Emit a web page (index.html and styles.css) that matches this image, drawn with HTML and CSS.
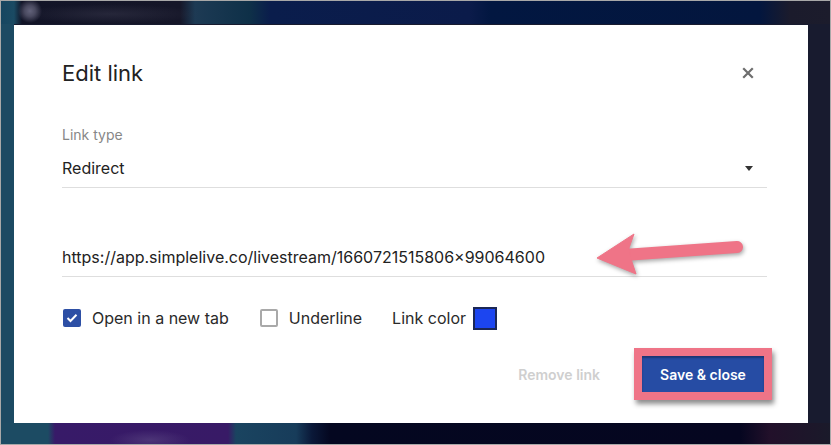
FILE: index.html
```html
<!DOCTYPE html>
<html>
<head>
<meta charset="utf-8">
<link rel="stylesheet" href="styles.css">
</head>
<body>
<div class="dialog">
  <div class="header">
    <h1 class="title">Edit link</h1>
    <span class="close" aria-label="Close">
      <svg width="12" height="12" viewBox="0 0 12 12"><path d="M2 2L10 10M10 2L2 10" stroke="#6e6e6e" stroke-width="2.2" stroke-linecap="square"/></svg>
    </span>
  </div>
  <div class="field">
    <div class="label">Link type</div>
    <div class="select">
      <span class="value">Redirect</span>
      <span class="caret"></span>
    </div>
  </div>
  <div class="url">https://app.simplelive.co/livestream/1660721515806×99064600</div>
  <div class="options">
    <label class="opt">
      <span class="box checked">
        <svg width="12" height="10" viewBox="0 0 12 10"><path d="M1.5 5L4.5 8L10.5 1.8" fill="none" stroke="#fff" stroke-width="2"/></svg>
      </span>
      <span>Open in a new tab</span>
    </label>
    <label class="opt">
      <span class="box"></span>
      <span>Underline</span>
    </label>
    <div class="opt color">
      <span>Link color</span>
      <span class="swatch"></span>
    </div>
  </div>
  <div class="actions">
    <span class="remove">Remove link</span>
    <button class="save">Save &amp; close</button>
  </div>
</div>
<svg class="arrow" width="160" height="60" viewBox="0 0 160 60">
  <g fill="#ef7487" stroke="#ef7487">
    <line x1="40" y1="28.5" x2="146" y2="21" stroke-width="12" stroke-linecap="round"/>
    <polygon points="6,32 43,8 38,22 41,36 45,48" stroke-width="1" stroke-linejoin="round"/>
  </g>
</svg>
</body>
</html>
```
FILE: styles.css
```css
html, body {
  margin: 0;
  padding: 0;
}
body {
  width: 831px;
  height: 445px;
  box-sizing: border-box;
  border: 1px solid #a8a8a8;
  overflow: hidden;
  font-family: Inter, "Noto Sans", sans-serif;
  color: #222;
  background:
    radial-gradient(ellipse 12px 12px at 30px 11px, #62627a 0, #4a4a60 45%, transparent 100%),
    radial-gradient(ellipse 90px 10px at 110px 14px, rgba(60, 60, 80, 0.45), transparent),
    radial-gradient(ellipse 40px 10px at 150px 440px, rgba(90, 70, 130, 0.6), transparent),
    linear-gradient(to right, #164560 0, #1a4a63 14px, #121427 22px, #151628 180px, #1d3a54 195px, #0e3048 250px, #0a1d4c 270px, #0b1b4a 470px, #021741 490px, #03163e 760px, #1b1b2c 790px, #1c1c2c 100%) top / 100% 24px no-repeat,
    linear-gradient(to right, #1c4b63 0, #1c4b63 48px, #371a68 55px, #381a66 228px, #1a4460 236px, #173c5a 296px, #0a1838 312px, #040720 330px, #050620 740px, #22102a 770px, #1a1a2a 100%) bottom / 100% 22px no-repeat,
    linear-gradient(to right, #1c4a63 0, #1c4a63 14px, #181b2f 14px);
  padding: 24px 22px 0 13px;
  position: relative;
}
.dialog {
  background: #fff;
  width: 794px;
  height: 398px;
  box-sizing: border-box;
  padding: 34px 41px 0 48px;
}
.header {
  display: flex;
  align-items: center;
  justify-content: space-between;
  height: 28px;
}
.title {
  margin: 0;
  font-size: 22px;
  font-weight: 400;
  line-height: 28px;
  color: #222;
}
.close {
  display: flex;
  width: 12px;
  height: 12px;
  margin-right: 13px;
}
.field {
  margin-top: 40px;
}
.label {
  font-size: 14px;
  line-height: 16px;
  color: #878787;
}
.select {
  margin-top: 15px;
  display: flex;
  align-items: center;
  justify-content: space-between;
  padding-bottom: 9px;
  border-bottom: 1px solid #dedede;
}
.value {
  font-size: 16px;
  line-height: 20px;
}
.caret {
  width: 0;
  height: 0;
  border-left: 4px solid transparent;
  border-right: 4px solid transparent;
  border-top: 5px solid #333;
  margin-right: 14px;
}
.url {
  margin-top: 59px;
  font-size: 16px;
  line-height: 20px;
  padding-bottom: 9px;
  border-bottom: 1px solid #dedede;
}
.options {
  margin-top: 32px;
  display: flex;
  align-items: center;
  height: 18px;
  padding-left: 1px;
  font-size: 16px;
  color: #2a2a2a;
}
.opt {
  display: flex;
  align-items: center;
  gap: 11px;
  margin-right: 31px;
}
.opt + .opt {
  margin-right: 30px;
}
.box {
  width: 18px;
  height: 18px;
  box-sizing: border-box;
  border: 2px solid #a9a9a9;
  border-radius: 2px;
  display: flex;
  align-items: center;
  justify-content: center;
}
.box.checked {
  border: none;
  background: #2d4fa5;
}
.opt.color {
  gap: 7px;
  margin-right: 0;
}
.swatch {
  width: 24px;
  height: 23px;
  box-sizing: border-box;
  border: 2px solid #1b2756;
  background: #1c45f0;
}
.actions {
  margin-top: 29px;
  display: flex;
  align-items: center;
  justify-content: flex-end;
  gap: 42px;
  padding-right: 3px;
}
.remove {
  font-size: 14px;
  font-weight: 600;
  color: #cfcfcf;
}
.save {
  width: 122px;
  height: 36px;
  border: none;
  background: #264ca4;
  color: #fff;
  font-family: Inter, "Noto Sans", sans-serif;
  font-size: 14px;
  font-weight: 600;
  box-shadow: inset 0 2px 2px rgba(0, 0, 0, 0.3), 0 0 0 8px #ef7487, 2px 4px 5px 8px rgba(0, 0, 0, 0.45);
}
.arrow {
  position: absolute;
  left: 590px;
  top: 225px;
  filter: drop-shadow(1px 2px 2px rgba(0, 0, 0, 0.35));
}
```
